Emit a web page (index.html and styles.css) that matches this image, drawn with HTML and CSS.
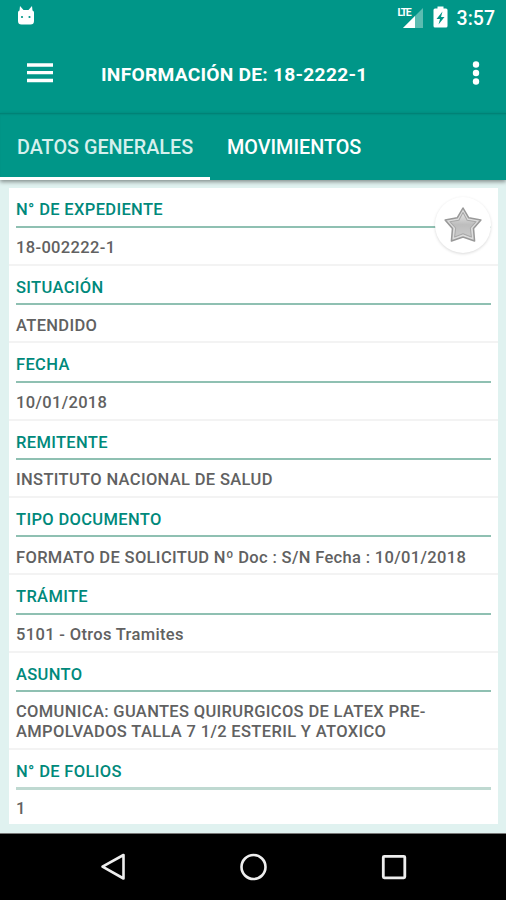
FILE: index.html
```html
<!DOCTYPE html>
<html lang="es">

<head>
    <meta charset="UTF-8">
    <title>Información de expediente</title>
    <link rel="stylesheet" href="styles.css">
</head>

<body>
<div class="status">
    <svg class="cat" width="18" height="20" viewBox="0 0 18 20">
        <path d="M3 0 L6.500 4 H11.500 L15 0 L15.500 4.500 Q17 5 17 6.500 V15 Q17 18.500 13.500 18.500 H4.500 Q1 18.500 1 15 V6.500 Q1 5 2.500 4.500 Z" fill="#fff"/>
        <circle cx="5" cy="11" r="1.100" fill="#009688"/>
        <circle cx="12.500" cy="11" r="1.100" fill="#009688"/>
    </svg>
    <div class="status-right">
        <div class="signal">
            <svg width="26" height="22" viewBox="0 0 26 22">
                <path d="M25 1 V21 H5 Z" fill="#5cbcb1"/>
                <path d="M17 9 V21 H5 Z" fill="#fff"/>
            </svg>
            <span class="lte">LTE</span>
        </div>
        <svg class="battery" width="15" height="22" viewBox="0 0 15 22">
            <path d="M4.500 0.500 H10.500 V2.500 H13 Q14.500 2.500 14.500 4 V20 Q14.500 21.500 13 21.500 H2 Q0.500 21.500 0.500 20 V4 Q0.500 2.500 2 2.500 H4.500 Z" fill="#fff"/>
            <path d="M9.500 5.500 L3.500 13 H7 L5.500 18.500 L11.500 11 H8 Z" fill="#009688"/>
        </svg>
        <span class="clock">3:57</span>
    </div>
</div>
<div class="toolbar">
    <svg class="menu" width="28" height="20" viewBox="0 0 28 20">
        <path d="M1 2 H27 M1 9.700 H27 M1 17.500 H27" stroke="#fff" stroke-width="3.300"/>
    </svg>
    <h1 class="title">INFORMACIÓN DE: 18-2222-1</h1>
    <svg class="more" width="8" height="24" viewBox="0 0 8 24">
        <g fill="#fff">
            <circle cx="4" cy="3.500" r="3.200"/>
            <circle cx="4" cy="12" r="3.200"/>
            <circle cx="4" cy="20.500" r="3.200"/>
        </g>
    </svg>
</div>
<div class="tabs">
    <div class="tab active">DATOS GENERALES</div>
    <div class="tab">MOVIMIENTOS</div>
</div>
<div class="content">
    <div class="card">
        <div class="fav">
            <svg width="42" height="40" viewBox="0 0 40 40" preserveAspectRatio="none">
                <defs>
                    <linearGradient id="grey" x1="0" y1="0" x2="0" y2="1">
                        <stop offset="0" stop-color="#e6e6e6"/>
                        <stop offset="0.500" stop-color="#bdbdbd"/>
                        <stop offset="1" stop-color="#cacaca"/>
                    </linearGradient>
                </defs>
                <path d="M20 3 L25.500 12.800 L37 15 L30 23.500 L31 36 L20 32 L9 36 L10 23.500 L3 15 L14.500 12.800 Z" fill="#dcdcdc" stroke="#999" stroke-width="1.500" stroke-linejoin="round"/>
                <path d="M20 7.500 L24 15.300 L32.500 16.700 L27 23 L28 32 L20 28.800 L12 32 L13 23 L7.500 16.700 L16 15.300 Z" fill="url(#grey)" stroke="#a8a8a8" stroke-width="1" stroke-linejoin="round"/>
            </svg>
        </div>
        <div class="row">
            <div class="label">N° DE EXPEDIENTE</div>
            <div class="value">18-002222-1</div>
        </div>
        <div class="row">
            <div class="label">SITUACIÓN</div>
            <div class="value">ATENDIDO</div>
        </div>
        <div class="row">
            <div class="label">FECHA</div>
            <div class="value">10/01/2018</div>
        </div>
        <div class="row">
            <div class="label">REMITENTE</div>
            <div class="value">INSTITUTO NACIONAL DE SALUD</div>
        </div>
        <div class="row">
            <div class="label">TIPO DOCUMENTO</div>
            <div class="value">FORMATO DE SOLICITUD Nº Doc : S/N Fecha : 10/01/2018</div>
        </div>
        <div class="row">
            <div class="label">TRÁMITE</div>
            <div class="value">5101 - Otros Tramites</div>
        </div>
        <div class="row">
            <div class="label">ASUNTO</div>
            <div class="value">COMUNICA: GUANTES QUIRURGICOS DE LATEX PRE-<br>AMPOLVADOS TALLA 7 1/2 ESTERIL Y ATOXICO</div>
        </div>
        <div class="row last">
            <div class="label">N° DE FOLIOS</div>
            <div class="value">1</div>
        </div>
    </div>
</div>
<div class="navbar">
    <svg width="28" height="30" viewBox="0 0 28 30">
        <path d="M24.500 3 V26.500 L3.500 14.700 Z" fill="none" stroke="#eee" stroke-width="2.600" stroke-linejoin="round"/>
    </svg>
    <svg width="30" height="30" viewBox="0 0 30 30">
        <circle cx="15.500" cy="15" r="12" fill="none" stroke="#eee" stroke-width="2.600"/>
    </svg>
    <svg width="28" height="30" viewBox="0 0 28 30">
        <rect x="4.300" y="4.300" width="21.500" height="21.500" rx="1" fill="none" stroke="#eee" stroke-width="2.800"/>
    </svg>
</div>
</body>

</html>
```

FILE: styles.css
```css
body {
    margin: 0;
    height: 900px;
    display: flex;
    flex-direction: column;
    overflow: hidden;
    background: #e0f2f0;
    font-family: Roboto, sans-serif;
}
.status {
    height: 36px;
    display: flex;
    justify-content: space-between;
    background: #009688;
    color: #fff;
}
.cat {
    margin: 6px 0 0 17px;
}
.status-right {
    display: flex;
    padding: 7px 11px 0 0;
}
.signal {
    position: relative;
    width: 26px;
}
.lte {
    position: absolute;
    left: 0;
    top: 0;
    font-size: 10.5px;
    line-height: 11px;
    font-weight: 700;
    letter-spacing: -1.4px;
}
.battery {
    margin: -1px 9px 0 9px;
}
.clock {
    font-size: 19.5px;
    line-height: 23px;
    font-weight: 500;
}
.toolbar {
    height: 77px;
    display: flex;
    align-items: center;
    background: #009688;
}
.menu {
    margin: -3px 0 0 26px;
}
.title {
    margin: 0 auto 0 47px;
    font-size: 19.2px;
    letter-spacing: 0.25px;
    font-weight: 700;
    color: #fff;
    white-space: nowrap;
}
.more {
    margin: -3px 26px 0 0;
}
.tabs {
    position: relative;
    height: 67px;
    display: flex;
    background: #009688;
    color: #fff;
    font-size: 19.8px;
    font-weight: 500;
    line-height: 69px;
    white-space: nowrap;
    box-shadow: inset 0 2px 2px -1px #00695f99, 0 2px 4px #00000066;
}
.tab {
    box-sizing: border-box;
    padding: 0 17px;
}
.active {
    width: 210px;
    border-bottom: 3px solid #fff;
    color: #d5f0ed;
}
.content {
    flex: 1;
    padding: 8px 8px 0 9px;
}
.card {
    position: relative;
    height: 636px;
    background: #fff;
    font-size: 16.5px;
    font-weight: 500;
    letter-spacing: 0.34px;
}
.row {
    border-bottom: 2px solid #f3f3f3;
}
.label {
    margin: 0 7px;
    height: 37.2px;
    line-height: 44px;
    border-bottom: 2px solid #8fc0b2;
    color: #00897b;
}
.value {
    padding: 10.4px 7px 6.2px;
    line-height: 19.6px;
    color: #616161;
    white-space: nowrap;
}
.row:first-child .label,
.fav + .row .label {
    height: 37.8px;
}
.last {
    border: 0;
}
.last .label {
    border-bottom: 3px solid #bfd9d1;
}
.last .value {
    padding-top: 9px;
}
.fav {
    position: absolute;
    right: 7px;
    top: 9px;
    width: 56px;
    height: 56px;
    display: flex;
    align-items: center;
    justify-content: center;
    border-radius: 50%;
    background: #fff;
    box-shadow: 0 1px 3px #00000026;
}
.navbar {
    box-sizing: border-box;
    height: 67px;
    display: flex;
    justify-content: center;
    align-items: center;
    gap: 111px;
    border-top: 1px solid #777;
    background: #000;
}
```
